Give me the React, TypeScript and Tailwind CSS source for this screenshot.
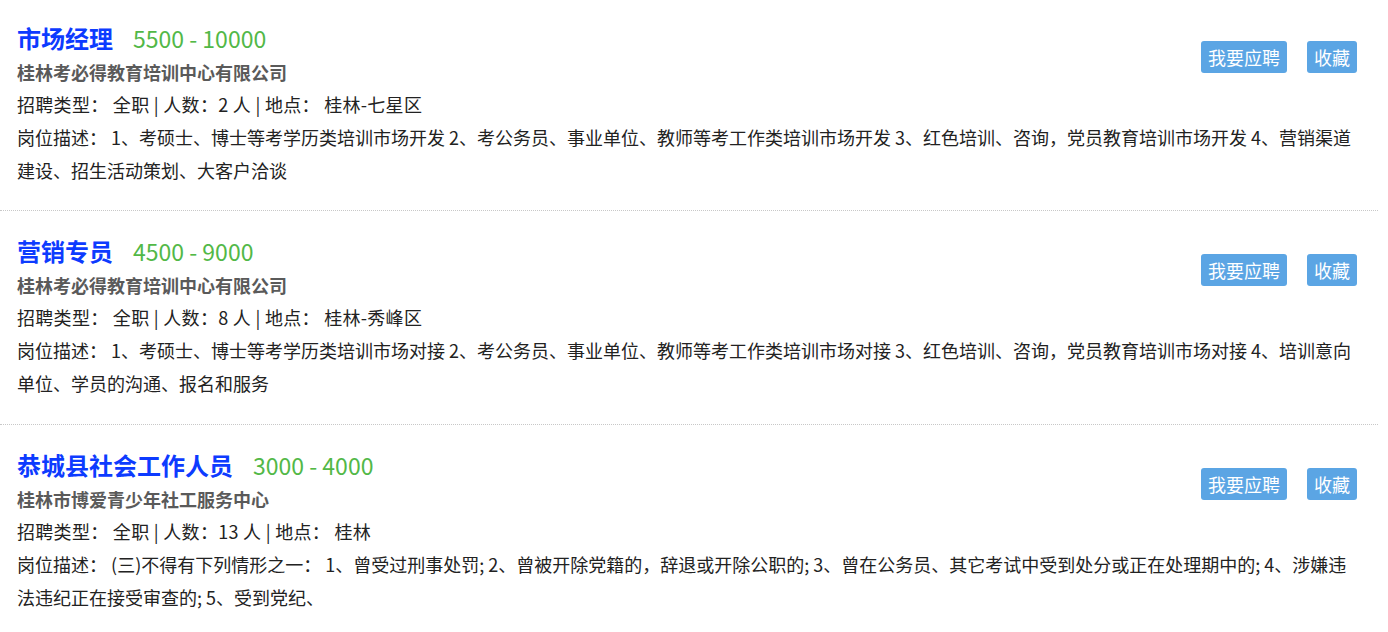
const jobs = [
  {
    title: '市场经理',
    salary: '5500 - 10000',
    company: '桂林考必得教育培训中心有限公司',
    type: '全职',
    count: '2',
    place: '桂林-七星区',
    desc: '1、考硕士、博士等考学历类培训市场开发 2、考公务员、事业单位、教师等考工作类培训市场开发 3、红色培训、咨询，党员教育培训市场开发 4、营销渠道建设、招生活动策划、大客户洽谈',
  },
  {
    title: '营销专员',
    salary: '4500 - 9000',
    company: '桂林考必得教育培训中心有限公司',
    type: '全职',
    count: '8',
    place: '桂林-秀峰区',
    desc: '1、考硕士、博士等考学历类培训市场对接 2、考公务员、事业单位、教师等考工作类培训市场对接 3、红色培训、咨询，党员教育培训市场对接 4、培训意向单位、学员的沟通、报名和服务',
  },
  {
    title: '恭城县社会工作人员',
    salary: '3000 - 4000',
    company: '桂林市博爱青少年社工服务中心',
    type: '全职',
    count: '13',
    place: '桂林',
    desc: '(三)不得有下列情形之一： 1、曾受过刑事处罚; 2、曾被开除党籍的，辞退或开除公职的; 3、曾在公务员、其它考试中受到处分或正在处理期中的; 4、涉嫌违法违纪正在接受审查的; 5、受到党纪、',
  },
];

export default function App() {
  return (
    <div className="w-[1378px] bg-white font-['Noto_Sans_CJK_SC',sans-serif] text-[#222]">
      {jobs.map((job, i) => (
        <div
          key={i}
          className={`pl-[17px] pr-[21px] ${i === 0 ? 'pt-[20px] pb-[23px]' : 'pt-[22px] pb-[24px]'} ${i < jobs.length - 1 ? 'border-b border-dotted border-[#c8c8c8]' : ''}`}
        >
          <div className="flex items-start justify-between">
            <div>
              <div className="flex items-center h-[36px]">
                <h2 className="text-[24px] font-bold text-[#0d3bff]">{job.title}</h2>
                <span className="ml-[20px] text-[23px] text-[#52b847]">{job.salary}</span>
              </div>
              <div className="h-[32px] flex items-center text-[18px] font-bold text-[#5a5a5a]">
                {job.company}
              </div>
              <div className="h-[33px] flex items-center text-[18px] whitespace-pre tracking-[0.3px]">
                招聘类型： {job.type} | 人数：{job.count} 人 | 地点： {job.place}
              </div>
            </div>
            <div className="flex gap-[20px] mt-[21px]">
              <button className="h-[32px] px-[7px] rounded-[3px] bg-[#5ba5e4] text-white text-[18px] leading-none">
                我要应聘
              </button>
              <button className="h-[32px] px-[7px] rounded-[3px] bg-[#5ba5e4] text-white text-[18px] leading-none">
                收藏
              </button>
            </div>
          </div>
          <p className="text-[18px] leading-[33px]">
            岗位描述： {job.desc}
          </p>
        </div>
      ))}
    </div>
  );
}
